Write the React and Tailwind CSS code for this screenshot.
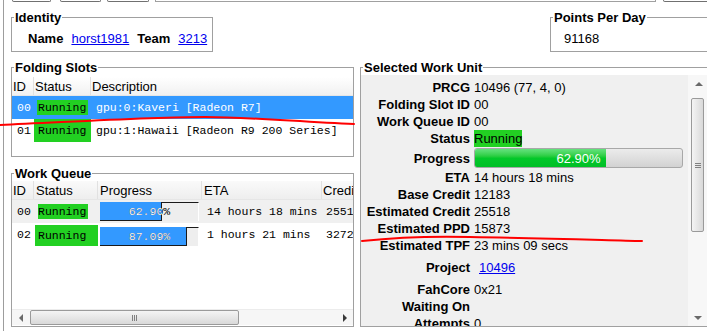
import React from "react";

const mono = "font-['Liberation_Mono','Courier_New',monospace] text-[11.5px]";
const run = "bg-[#22d022]";
const link = "text-[#0000ee] underline";

function GroupBox({ title, className = "", children }) {
  return (
    <fieldset className={`min-w-0 border border-[#a0a0a0] ${className}`}>
      <legend className="ml-[2px] px-[1px] font-bold leading-[15px]">{title}</legend>
      {children}
    </fieldset>
  );
}

function HeadCell({ w, last, children }) {
  return (
    <div className={`${w} shrink-0 h-full pl-[1px] flex items-center ${last ? "" : "border-r border-[#e1e1e1]"}`}>
      {children}
    </div>
  );
}

function QueueBar({ pct, fill, className = "" }) {
  return (
    <div className={`relative ml-[2px] flex w-[99px] h-[19px] ${className}`}>
      <div className={`${fill} h-full bg-[#3399ff] border-r border-b border-[#1a1a1a]`} />
      <div className="flex-1 h-full bg-[#eeeeee] border-t border-t-[#1a1a1a] border-r border-r-white" />
      <div className={`absolute inset-0 flex items-center justify-center text-black ${mono}`}>{pct}</div>
      <div className={`absolute left-0 top-0 h-full overflow-hidden ${fill}`}>
        <div className={`w-[99px] h-full flex items-center justify-center text-white ${mono}`}>{pct}</div>
      </div>
    </div>
  );
}

function Row({ label, h = "h-[17px]", children }) {
  return (
    <div className={`flex items-center ${h}`}>
      <div className="w-[109px] shrink-0 text-right font-bold whitespace-nowrap">{label}</div>
      <div className="ml-[4px] flex items-center whitespace-nowrap">{children}</div>
    </div>
  );
}

function Thumb({ vertical }) {
  return vertical ? (
    <div className="ml-[3px] mt-[6px] w-[13px] h-[134px] rounded-[2px] border border-[#9a9a9a] bg-gradient-to-r from-[#f4f4f4] to-[#d9d9d9] flex flex-col items-center justify-center gap-[1px]">
      <div className="w-[6px] h-px bg-[#808080]" />
      <div className="w-[6px] h-px bg-[#808080]" />
      <div className="w-[6px] h-px bg-[#808080]" />
    </div>
  ) : (
    <div className="w-[209px] h-[15px] rounded-[2px] border border-[#9a9a9a] bg-gradient-to-b from-[#f4f4f4] to-[#d9d9d9] flex items-center justify-center gap-[1px]">
      <div className="w-px h-[6px] bg-[#808080]" />
      <div className="w-px h-[6px] bg-[#808080]" />
      <div className="w-px h-[6px] bg-[#808080]" />
    </div>
  );
}

export default function App() {
  return (
    <div className="relative w-[707px] h-[331px] overflow-hidden bg-white text-black text-[13px] font-['Liberation_Sans',Arial,sans-serif] leading-[15px]">
      <div className="ml-[3px] h-full border-l border-[#9d9d9d]">
        {/* toolbar remnants */}
        <div className="flex h-[3px] items-start pl-[8px]">
          <div className="shrink-0 w-[39px] h-[2px] border-x border-b border-[#707070] rounded-b-[2px]" />
          <div className="shrink-0 ml-[9px] w-[41px] h-[2px] border-x border-b border-[#707070] rounded-b-[2px]" />
          <div className="shrink-0 ml-[6px] w-[42px] h-[2px] border-x border-b border-[#707070] rounded-b-[2px]" />
          <div className="shrink-0 ml-[6px] w-[501px] h-[2px] border-x border-b border-[#a0a0a0]" />
          <div className="shrink-0 ml-[7px] w-[60px] h-[2px] border-x border-b border-[#707070] rounded-b-[2px]" />
        </div>

        {/* identity + ppd */}
        <div className="mt-[7px] flex items-start pl-[7px]">
          <GroupBox title="Identity" className="w-[202px] shrink-0">
            <div className="flex items-center gap-[8px] pl-[16px] pt-[6px] pb-[4px] leading-[16px] whitespace-nowrap">
              <span className="font-bold">Name</span>
              <span className={link}>horst1981</span>
              <span className="font-bold">Team</span>
              <span className={link}>3213</span>
            </div>
          </GroupBox>
          <GroupBox title="Points Per Day" className="ml-[337px] w-[170px] shrink-0">
            <div className="pl-[13px] pt-[6px] pb-[4px] leading-[16px]">91168</div>
          </GroupBox>
        </div>

        {/* main area */}
        <div className="mt-[8px] flex items-start pl-[7px]">
          <div className="w-[343px] shrink-0 flex flex-col">
            <GroupBox title="Folding Slots">
              <div className="h-[81px] pt-[2px]">
                <div className="flex h-[19px] bg-gradient-to-b from-white to-[#f1f1f1] border-b border-[#e6e6e6]">
                  <HeadCell w="w-[22px]">ID</HeadCell>
                  <HeadCell w="w-[57px]">Status</HeadCell>
                  <HeadCell w="flex-1" last>Description</HeadCell>
                </div>
                <div className={`flex items-center h-[23px] bg-[#3399ff] text-white ${mono}`}>
                  <div className="w-[22px] pl-[5px]">00</div>
                  <div className="w-[57px]">
                    <div className={`ml-[3px] w-[51px] h-[15px] pl-[1px] flex items-center text-black ${run}`}>Running</div>
                  </div>
                  <div className="pl-[5px]">gpu:0:Kaveri [Radeon R7]</div>
                </div>
                <div className={`flex items-center h-[23px] ${mono}`}>
                  <div className="w-[22px] pl-[5px]">01</div>
                  <div className="w-[57px] h-full">
                    <div className={`w-[57px] h-full pl-[4px] flex items-center ${run}`}>Running</div>
                  </div>
                  <div className="pl-[5px] whitespace-nowrap">gpu:1:Hawaii [Radeon R9 200 Series]</div>
                </div>
              </div>
            </GroupBox>

            <GroupBox title="Work Queue" className="mt-[9px]">
              <div className="h-[145px] flex flex-col overflow-hidden">
                <div className="flex h-[19px] bg-gradient-to-b from-[#fafafa] to-[#eeeeee] border-b border-[#e6e6e6] whitespace-nowrap overflow-hidden">
                  <HeadCell w="w-[22px]">ID</HeadCell>
                  <HeadCell w="w-[64px]">
                    <span className="pl-[1px]">Status</span>
                  </HeadCell>
                  <HeadCell w="w-[104px]">
                    <span className="pl-[1px]">Progress</span>
                  </HeadCell>
                  <HeadCell w="w-[120px]">
                    <span className="pl-[1px]">ETA</span>
                  </HeadCell>
                  <HeadCell w="flex-1" last>Credit</HeadCell>
                </div>
                <div className={`flex items-center h-[23px] bg-[#f0f0f0] whitespace-nowrap ${mono}`}>
                  <div className="w-[22px] shrink-0 pl-[5px]">00</div>
                  <div className="w-[64px] shrink-0">
                    <div className={`ml-[4px] w-[50px] h-[15px] flex items-center ${run}`}>Running</div>
                  </div>
                  <div className="w-[104px] shrink-0">
                    <QueueBar pct="62.90%" fill="w-[62px]" />
                  </div>
                  <div className="w-[120px] shrink-0 pl-[5px]">14 hours 18 mins</div>
                  <div className="pl-[4px]">25518</div>
                </div>
                <div className={`flex items-end h-[23px] whitespace-nowrap ${mono}`}>
                  <div className="w-[22px] shrink-0 pl-[5px] self-center">02</div>
                  <div className="w-[64px] shrink-0 h-[21px]">
                    <div className={`ml-[1px] w-[63px] h-[21px] pl-[3px] flex items-center ${run}`}>Running</div>
                  </div>
                  <div className="w-[104px] shrink-0 self-center">
                    <QueueBar pct="87.09%" fill="w-[87px]" className="mt-[3px]" />
                  </div>
                  <div className="w-[120px] shrink-0 pl-[5px] self-center">1 hours 21 mins</div>
                  <div className="pl-[4px] self-center">32726</div>
                </div>

                <div className="mt-auto mb-px h-[16px] flex items-center bg-[#f6f6f6] border-t border-[#ececec]">
                  <div className="w-[18px] h-full flex items-center justify-center">
                    <div className="w-0 h-0 border-y-[4px] border-y-transparent border-r-[4px] border-r-[#6a6a6a]" />
                  </div>
                  <Thumb />
                  <div className="flex-1" />
                  <div className="w-[17px] h-full flex items-center justify-center">
                    <div className="w-0 h-0 border-y-[4px] border-y-transparent border-l-[4px] border-l-[#3a3a3a]" />
                  </div>
                </div>
              </div>
            </GroupBox>
          </div>

          <GroupBox title="Selected Work Unit" className="ml-[6px] w-[348px] shrink-0">
            <div className="h-[251px] flex">
              <div className="w-[327px] shrink-0 bg-[#f0f0f0] pt-[4px] overflow-hidden">
                <Row label="PRCG">10496 (77, 4, 0)</Row>
                <Row label="Folding Slot ID">00</Row>
                <Row label="Work Queue ID">00</Row>
                <Row label="Status">
                  <span className={`h-[17px] flex items-center ${run}`}>Running</span>
                </Row>
                <Row label="Progress" h="h-[22px]">
                  <div className="relative w-[209px] h-[20px] rounded-[3px] border border-[#a8a8a8] bg-gradient-to-b from-[#ececec] to-[#d2d2d2] overflow-hidden">
                    <div className="w-[131px] h-full bg-gradient-to-b from-[#63e27d] via-[#03c82a] to-[#00bf26]" />
                    <div className="absolute inset-0 flex items-center justify-center text-white">62.90%</div>
                  </div>
                </Row>
                <Row label="ETA">14 hours 18 mins</Row>
                <Row label="Base Credit">12183</Row>
                <Row label="Estimated Credit">25518</Row>
                <Row label="Estimated PPD">15873</Row>
                <Row label="Estimated TPF">23 mins 09 secs</Row>
                <Row label="Project" h="h-[27px]">
                  <span className={`ml-[5px] ${link}`}>10496</span>
                </Row>
                <Row label="FahCore" h="h-[16px]">0x21</Row>
                <Row label="Waiting On" h="h-[18px]"> </Row>
                <Row label="Attempts" h="h-[16px]">0</Row>
              </div>
              <div className="w-[19px] shrink-0 bg-[#f7f7f7] flex flex-col">
                <div className="h-[17px] flex items-center justify-center pl-[2px]">
                  <div className="w-0 h-0 border-x-[4px] border-x-transparent border-b-[4px] border-b-[#6a6a6a]" />
                </div>
                <Thumb vertical />
                <div className="flex-1" />
                <div className="h-[17px] flex items-center justify-center">
                  <div className="w-0 h-0 border-x-[4px] border-x-transparent border-t-[4px] border-t-[#6a6a6a]" />
                </div>
              </div>
            </div>
          </GroupBox>
        </div>
      </div>

      {/* red pen marks */}
      <svg className="absolute left-0 top-0 pointer-events-none" width="707" height="331" viewBox="0 0 707 331">
        <path d="M0 125 C 70 122, 150 117, 205 117 C 250 117, 300 122, 354 124" fill="none" stroke="#ff0000" strokeWidth="2" strokeLinecap="round" />
        <path d="M362 241 C 390 238, 430 236, 470 237 C 540 238, 600 240, 642 241" fill="none" stroke="#ff0000" strokeWidth="2" strokeLinecap="round" />
      </svg>
    </div>
  );
}
